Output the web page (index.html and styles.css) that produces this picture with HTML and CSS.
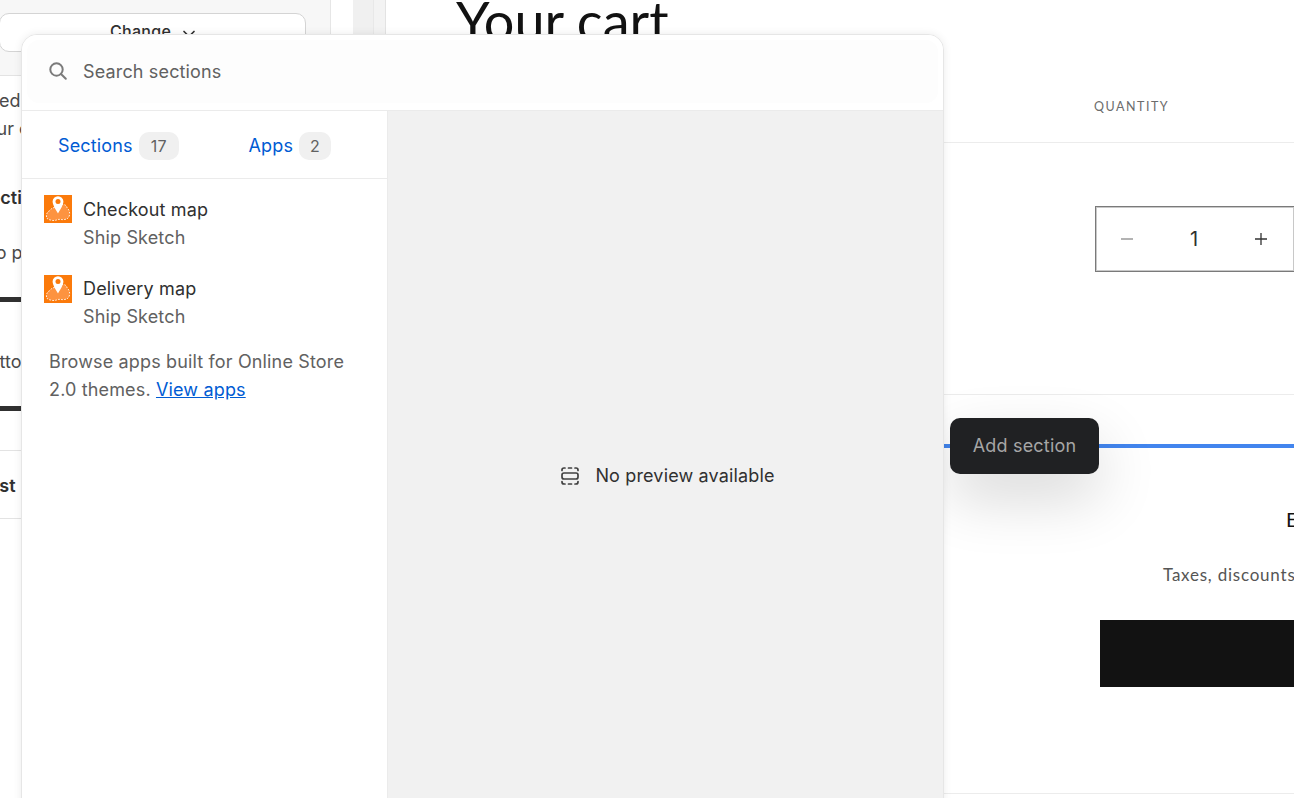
FILE: index.html
```html
<!DOCTYPE html>
<html lang="en">
<head>
<meta charset="utf-8">
<title>Add section</title>
<link rel="stylesheet" href="styles.css">
</head>
<body>
<div class="editor">
  <aside class="sidebar">
    <div class="side-top">
      <button class="change-btn">Change
        <svg class="chev" viewBox="0 0 14 14" width="14" height="14"><path d="M2 4.500l5 5 5-5" fill="none" stroke="#303030" stroke-width="1.700" stroke-linecap="round" stroke-linejoin="round"/></svg>
      </button>
    </div>
    <div class="side-copy">
      <p class="line line-a">Selected</p>
      <p class="line line-b">your cart</p>
      <p class="line bold line-c">Section</p>
      <p class="line line-d">to padding</p>
      <div class="slider slider-a"></div>
      <p class="line line-e">Bottom</p>
      <div class="slider slider-b"></div>
    </div>
    <div class="side-row"><span class="bold">Cust</span></div>
  </aside>
  <div class="gutter-white"></div>
  <div class="gutter-a"></div>
  <div class="gutter-b"></div>
  <main class="store">
    <h1 class="cart-title">Your cart</h1>
    <div class="table-head"><span class="qty-label">QUANTITY</span></div>
    <div class="item-row">
      <div class="qty-box">
        <svg class="qty-icon" viewBox="0 0 14 14" width="14" height="14"><path d="M1 7h12" stroke="#8a8a8a" stroke-width="1.300"/></svg>
        <span class="qty-num">1</span>
        <svg class="qty-icon" viewBox="0 0 14 14" width="14" height="14"><path d="M1 7h12M7 1v12" stroke="#333" stroke-width="1.300"/></svg>
      </div>
    </div>
    <div class="insert-line"></div>
    <div class="totals">
      <p class="est">Estimated total</p>
      <p class="tax">Taxes, discounts and shipping calculated at checkout</p>
      <div class="checkout"></div>
    </div>
  </main>
</div>

<div class="tooltip">Add section</div>

<section class="picker">
  <header class="search">
    <div class="search-field">
      <svg class="search-icon" viewBox="0 0 20 20" width="20" height="20"><circle cx="8.500" cy="8.500" r="6.200" fill="none" stroke="#7b7b7b" stroke-width="2"/><path d="M13 13l4.800 4.800" stroke="#7b7b7b" stroke-width="2" stroke-linecap="round"/></svg>
      <span class="search-text">Search sections</span>
    </div>
  </header>
  <div class="picker-body">
    <div class="list">
      <nav class="tabs">
        <span class="tab tab-sections">Sections <b class="count count-wide">17</b></span>
        <span class="tab tab-apps">Apps <b class="count">2</b></span>
      </nav>
      <div class="apps">
        <div class="app">
          <svg class="app-icon" viewBox="0 0 28 28" width="28" height="28"><use href="#mapicon"/></svg>
          <div><div class="app-name">Checkout map</div><div class="app-by">Ship Sketch</div></div>
        </div>
        <div class="app">
          <svg class="app-icon app-icon-low" viewBox="0 0 28 28" width="28" height="28"><use href="#mapicon"/></svg>
          <div><div class="app-name">Delivery map</div><div class="app-by">Ship Sketch</div></div>
        </div>
      </div>
      <p class="browse">Browse apps built for Online Store 2.0 themes. <a class="view" href="#">View apps</a></p>
    </div>
    <div class="preview">
      <svg viewBox="0 0 20 20" width="20" height="20"><g fill="none" stroke="#404040" stroke-width="1.700" stroke-linecap="round"><rect x="2" y="7" width="16" height="6" rx="2"/><path d="M2 4.500V4a2 2 0 0 1 2-2h1M8.500 2h3M15 2h1a2 2 0 0 1 2 2v.5M2 15.500v.5a2 2 0 0 0 2 2h1M8.500 18h3M15 18h1a2 2 0 0 0 2-2v-.5"/></g></svg>
      <span class="preview-text">No preview available</span>
    </div>
  </div>
</section>

<svg class="defs" width="0" height="0" aria-hidden="true">
  <symbol id="mapicon" viewBox="0 0 28 28">
    <rect width="28" height="28" fill="#fb7a0b"/>
    <path d="M2.500 22c-.5-3 1-5.500 3.500-6.500 1-2 3-3 5-3l6-3c3-.5 5.500.5 6 3 2 2 3 4.500 2.500 7.500-.5 3-2.500 4.500-5.500 4.500-2 .5-4-.5-6 0-2.500 1-5 1.500-7.500.500-2.500-.500-3.800-1.500-4-3z" fill="#fd9340" stroke="#fff" stroke-opacity=".9" stroke-width="1" stroke-dasharray="1.600 1.400"/>
    <path d="M14 1.200a5.400 5.400 0 0 1 5.400 5.400c0 3.300-3.200 8.400-5.400 12-2.200-3.600-5.400-8.700-5.400-12A5.400 5.400 0 0 1 14 1.200z" fill="#fff"/>
    <circle cx="14" cy="6.600" r="2.500" fill="#fb7a0b"/>
  </symbol>
</svg>
</body>
</html>
```
FILE: styles.css
```css
* { box-sizing: border-box; }
html, body { margin: 0; height: 100%; overflow: hidden; background: #fff; }
body { font-family: Inter, "Liberation Sans", sans-serif; color: #303030; }
p, h1 { margin: 0; }

.editor { display: flex; width: 1294px; height: 798px; overflow: hidden; }

.sidebar { width: 331px; flex: none; border-right: 1px solid #e6e6e6; font-size: 18px; overflow: hidden; background: #fff; }
.side-top { height: 76px; background: #f7f7f7; border-bottom: 1px solid #e3e3e3; padding: 13px 24px 0 0; margin-bottom: 11px; }
.change-btn { display: flex; width: 307px; height: 39px; margin-left: -1px; padding: 7px 0 0 110px; gap: 11px; align-items: flex-start; background: #fff; border: 1px solid #d4d4d4; border-radius: 10px; font: 500 16px/20px Inter, sans-serif; letter-spacing: .3px; color: #303030; }
.chev { margin-top: 6px; }
.side-copy { height: 363px; }
.line { line-height: 28px; white-space: nowrap; color: #4a4a4a; }
.side-copy .line-a { margin-left: -54px; }
.side-copy .line-b { margin-left: -24px; }
.side-copy .line-c { margin-top: 41px; margin-left: -22px; font-weight: 600; color: #303030; }
.side-copy .line-d { margin-top: 27px; margin-left: -10px; }
.slider { height: 5px; width: 60px; background: #303030; }
.slider-a { margin-top: 30px; }
.side-copy .line-e { margin-top: 46px; margin-left: -23px; }
.slider-b { margin-top: 30px; }
.bold { font-weight: 600; }
.side-row { height: 69px; border-top: 1px solid #e3e3e3; border-bottom: 1px solid #e3e3e3; display: flex; align-items: center; margin-left: -25px; padding-top: 1px; font-size: 18px; }

.gutter-white { width: 22px; flex: none; background: #fff; }
.gutter-a { width: 21px; flex: none; background: #f0f0f0; border-right: 1px solid #e8e8e8; }
.gutter-b { width: 12px; flex: none; background: #f3f3f3; border-right: 1px solid #e3e3e3; }

.store { flex: 1; min-width: 0; overflow: hidden; font-family: Lato, sans-serif; color: #121212; }
.cart-title { margin: -11px 0 0 70px; font-size: 54px; line-height: 64px; font-weight: 400; white-space: nowrap; }
.table-head { height: 90px; border-bottom: 1px solid #ececec; padding: 46px 0 0 708px; }
.qty-label { font-size: 12.500px; line-height: 16px; letter-spacing: 1.500px; color: #6c6c6c; display: block; white-space: nowrap; }
.item-row { height: 252px; border-bottom: 1px solid #ececec; padding: 63px 0 0 709px; }
.qty-box { width: 200px; height: 66px; border: 1px solid #7a7a7a; box-shadow: inset 0 0 0 1px #c8c8c8; display: flex; align-items: center; justify-content: space-between; padding: 0 26px 0 24px; }
.qty-num { font: 400 20px/24px Inter, sans-serif; color: #303030; }
.insert-line { height: 4px; margin-top: 49px; background: #4285ee; }
.totals { height: 346px; padding-top: 57px; border-bottom: 1px solid #ececec; white-space: nowrap; }
.est { margin-left: 900px; font-size: 20px; line-height: 28px; }
.tax { margin: 30px 0 0 777px; font-size: 17px; line-height: 24px; color: #555; letter-spacing: .78px; }
.checkout { width: 300px; height: 67px; margin: 33px 0 0 714px; background: #121212; }

.tooltip { position: absolute; left: 950px; top: 418px; width: 149px; height: 56px; padding-bottom: 2px; display: flex; align-items: center; justify-content: center; background: #202123; border-radius: 10px; color: #a6a6a6; font-size: 18px; letter-spacing: .18px; box-shadow: 0 24px 60px rgba(0,0,0,.16); }

.picker { position: absolute; left: 21px; top: 34px; width: 923px; height: 790px; display: flex; flex-direction: column; background: #fff; border: 1px solid #e6e6e6; border-radius: 16px; overflow: hidden; box-shadow: 0 0 8px rgba(0,0,0,.08); letter-spacing: .15px; }
.search { height: 76px; flex: none; padding: 5px; background: #fff; border-bottom: 1px solid #ebebeb; }
.search-field { height: 63px; display: flex; align-items: center; gap: 15px; padding-left: 21px; padding-bottom: 1px; background: #fdfdfd; border-radius: 12px; }
.search-text { font-size: 18px; color: #616161; }
.picker-body { flex: 1; display: flex; min-height: 0; }
.list { width: 366px; flex: none; border-right: 1px solid #ebebeb; }
.tabs { height: 68px; display: flex; align-items: center; border-bottom: 1px solid #ebebeb; padding: 2px 0 0 36px; }
.tab { display: flex; align-items: center; gap: 6px; color: #005bd3; font-size: 18px; }
.tab-sections { width: 190.500px; }
.count { min-width: 32px; height: 28px; padding: 0 8px; display: flex; align-items: center; justify-content: center; border-radius: 10px; background: #f0f0f0; color: #616161; font-weight: 400; font-size: 16px; }
.count-wide { min-width: 40px; }
.apps { padding: 16px 0 0 22px; }
.app { display: flex; gap: 11px; height: 79px; align-items: flex-start; font-size: 18px; line-height: 28px; }
.app-icon { flex: none; }
.app-icon-low { margin-top: 1px; }
.app-name { color: #303030; margin-top: 1px; }
.app-by { color: #616161; }
.browse { margin: -5px 20px 0 27px; font-size: 18px; line-height: 28px; color: #616161; }
.view { color: #005bd3; text-decoration: underline; }
.preview { flex: 1; background: #f1f1f1; display: flex; align-items: flex-start; justify-content: center; gap: 15px; padding: 355px 0 0 4px; }
.preview-text { font-size: 18px; line-height: 20px; color: #303030; }
.defs { position: absolute; }
```
